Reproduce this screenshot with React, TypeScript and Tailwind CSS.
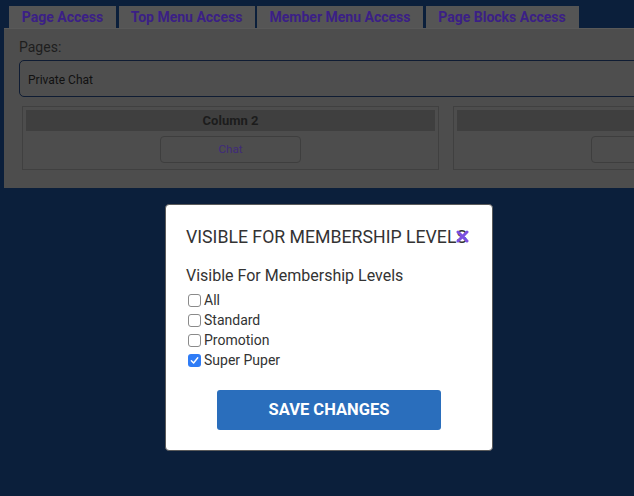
import React from 'react';

const TABS = [
  { label: 'Page Access', w: 'w-[107px]' },
  { label: 'Top Menu Access', w: 'w-[136px]' },
  { label: 'Member Menu Access', w: 'w-[166px]' },
  { label: 'Page Blocks Access', w: 'w-[153px]' },
];

const LEVELS = [
  { label: 'All', checked: false },
  { label: 'Standard', checked: false },
  { label: 'Promotion', checked: false },
  { label: 'Super Puper', checked: true },
];

function ColumnCard({ title, button }: { title: string; button: string }) {
  return (
    <div className="w-[417px] shrink-0 border border-[#404040] p-[3px] pb-[6px]">
      <div className="h-[21px] bg-[#3f3f3f] flex items-center justify-center text-[13px] font-bold text-[#1c1c1c]">
        {title}
      </div>
      <div className="flex justify-center mt-[5px]">
        <button className="w-[141px] h-[27px] rounded-[4px] border border-[#3e3e3e] text-[11.5px] text-[#3f2a7a]">
          {button}
        </button>
      </div>
    </div>
  );
}

export default function App() {
  return (
    <div className="relative h-[496px] w-full overflow-hidden bg-[#0b1f3b]" style={{ fontFamily: 'Roboto, "Liberation Sans", sans-serif' }}>
      {/* tabs */}
      <div className="flex gap-[2.5px] pl-[9px] pt-[6px]">
        {TABS.map((t) => (
          <div key={t.label} className={`${t.w} h-[22px] bg-[#555555] flex items-center justify-center text-[14px] font-bold text-[#3b1f86] whitespace-nowrap`}>
            {t.label}
          </div>
        ))}
      </div>

      {/* panel */}
      <div className="ml-[4px] w-[900px] h-[160px] bg-[#4d4d4d] border-t border-[#595959] px-[15px] pt-[10px]">
        <div className="text-[14px] text-[#1e1e1e] leading-[16px]">Pages:</div>
        <div className="mt-[5px] h-[37px] rounded-[5px] border border-[#0f1c33] bg-[#4e4e4e] flex items-center pl-[8px] pt-[2px] text-[12px] text-[#111]">
          Private Chat
        </div>
        <div className="flex gap-[14px] mt-[9px] pl-[3px]">
          <ColumnCard title="Column 2" button="Chat" />
          <ColumnCard title="" button="" />
        </div>
      </div>

      {/* modal */}
      <div className="absolute left-[165px] top-[204px] w-[328px] h-[247px] bg-white rounded-[4px] border border-[#5a5a5a] pl-[20px] pt-[20px]">
        <div className="relative">
          <h2 className="text-[17.7px] leading-[24px] text-[#333] uppercase whitespace-nowrap">Visible for membership levels</h2>
          <svg className="absolute left-[270px] top-[5px]" width="13" height="13" viewBox="0 0 13 13" fill="none">
            <path d="M2 2 L11 11 M11 2 L2 11" stroke="#7b4fe0" strokeWidth="3" strokeLinecap="round" />
          </svg>
        </div>
        <div className="mt-[16px] text-[16px] leading-[22px] text-[#333]">Visible For Membership Levels</div>
        <div className="mt-[3px] flex flex-col">
          {LEVELS.map((l) => (
            <label key={l.label} className="flex items-center h-[20px] text-[14px] text-[#333]">
              {l.checked ? (
                <span className="ml-[2px] w-[13px] h-[13px] rounded-[3px] bg-[#2f7cf6] flex items-center justify-center">
                  <svg width="9" height="9" viewBox="0 0 10 10" fill="none">
                    <path d="M1.5 5.3 L4 7.8 L8.6 2" stroke="white" strokeWidth="1.6" strokeLinecap="round" strokeLinejoin="round" />
                  </svg>
                </span>
              ) : (
                <span className="ml-[2px] w-[13px] h-[13px] rounded-[3px] border border-[#8a8a8a] bg-white" />
              )}
              <span className="ml-[3px]">{l.label}</span>
            </label>
          ))}
        </div>
        <div className="mt-[20px] pl-[31px]">
          <button className="w-[224px] h-[40px] rounded-[3px] bg-[#2a6ebc] text-white text-[16.5px] font-bold uppercase">
            Save changes
          </button>
        </div>
      </div>
    </div>
  );
}
